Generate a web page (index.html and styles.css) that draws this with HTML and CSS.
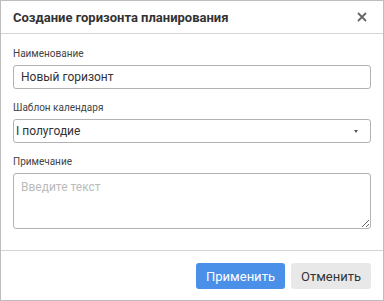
FILE: index.html
```html
<!DOCTYPE html>
<html lang="ru">
<head>
    <meta charset="UTF-8">
    <title>Создание горизонта планирования</title>
    <link rel="stylesheet" href="styles.css">
</head>
<body>

<div class="dialog">
    <div class="dialog-head">
        <h1 class="dialog-title">Создание горизонта планирования</h1>
        <span class="dialog-close">
            <svg width="10" height="10" viewBox="0 0 10 10">
                <path d="M1 1L9 9M9 1L1 9" stroke="#666" stroke-width="1.8" fill="none"/>
            </svg>
        </span>
    </div>
    <div class="dialog-body">
        <div class="field">
            <label class="field-label">Наименование</label>
            <input class="field-input" type="text" value="Новый горизонт">
        </div>
        <div class="field">
            <label class="field-label">Шаблон календаря</label>
            <div class="field-select">
                <span>I полугодие</span>
                <i class="select-arrow"></i>
            </div>
        </div>
        <div class="field field-last">
            <label class="field-label">Примечание</label>
            <textarea class="field-text" placeholder="Введите текст"></textarea>
        </div>
    </div>
    <div class="dialog-foot">
        <button class="btn btn-primary">Применить</button>
        <button class="btn">Отменить</button>
    </div>
</div>

</body>
</html>
```

FILE: styles.css
```css
*{
    margin: 0;
    padding: 0;
    box-sizing: border-box;
}
body{
    font-family: Roboto, "Liberation Sans", sans-serif;
    color: #333;
    background: #fff;
}

.dialog{
    width: 384px;
    height: 301px;
    border: 1px solid #bdbdbd;
    display: flex;
    flex-direction: column;
}
.dialog-head{
    height: 33px;
    border-bottom: 1px solid #d4d4d4;
    padding: 0 12px;
    display: flex;
    align-items: center;
    justify-content: space-between;
}
.dialog-title{
    font-size: 13px;
    font-weight: bold;
    color: #333;
}
.dialog-close{
    width: 10px;
    height: 10px;
    margin-right: 4px;
    display: flex;
    cursor: pointer;
}

.dialog-body{
    flex: 1;
    padding: 14px 12px 0;
}
.field{
    margin-bottom: 13px;
}
.field-label{
    display: block;
    font-size: 10px;
    line-height: 12px;
    color: #444;
    margin-bottom: 5px;
}
.field-input,
.field-select,
.field-text{
    display: block;
    width: 100%;
    height: 24px;
    border: 1px solid #b3b3b3;
    border-radius: 3px;
    font-family: inherit;
    font-size: 12px;
    color: #333;
    background: #fff;
    outline: none;
}
.field-input{
    padding: 0 7px;
}
.field-select{
    padding: 0 7px 0 2px;
    display: flex;
    align-items: center;
    justify-content: space-between;
}
.select-arrow{
    width: 0;
    height: 0;
    margin-right: 5px;
    border-left: 2.5px solid transparent;
    border-right: 2.5px solid transparent;
    border-top: 3px solid #555;
}
.field-text{
    height: 56px;
    padding: 6px 7px;
    resize: vertical;
}
.field-text::placeholder{
    color: #bbb;
}

.dialog-foot{
    height: 50px;
    border-top: 1px solid #d4d4d4;
    padding: 12px 12px 0;
    display: flex;
    justify-content: flex-end;
    gap: 6px;
}
.btn{
    height: 26px;
    padding: 0 10px;
    border: 0;
    border-radius: 3px;
    background: #e8e8e8;
    color: #333;
    font-family: inherit;
    font-size: 13px;
    cursor: pointer;
}
.btn-primary{
    background: #4a90e8;
    color: #fff;
}
```
